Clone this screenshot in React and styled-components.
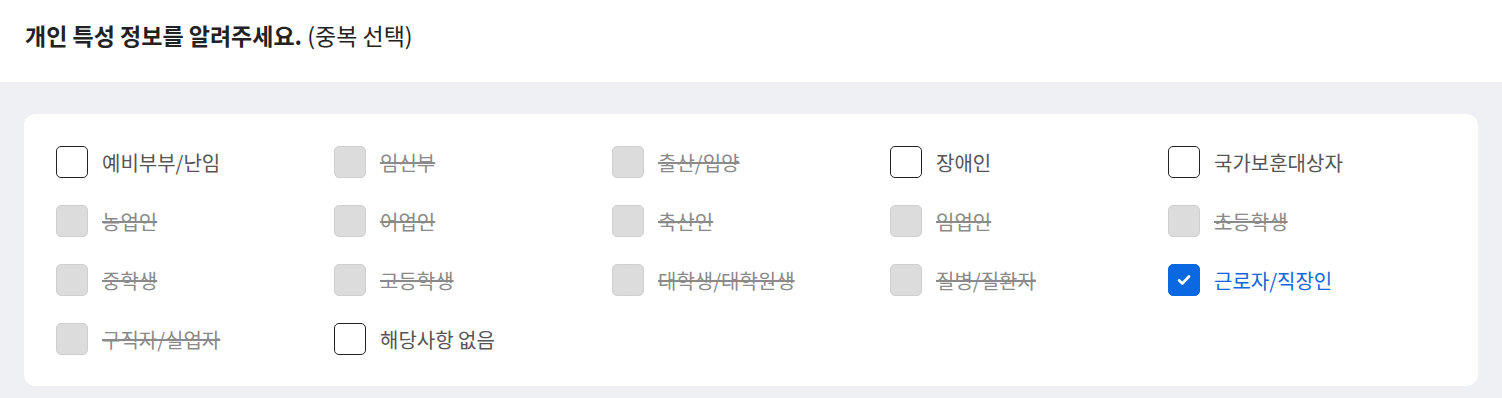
import React from 'react';
import styled, { createGlobalStyle } from 'styled-components';

const GlobalStyle = createGlobalStyle`
  html, body {
    margin: 0;
    padding: 0;
    background: #eff0f3;
    font-family: "Noto Sans CJK KR", "Noto Sans", sans-serif;
  }
`;

const Page = styled.div`
  width: 1502px;
  min-height: 398px;
  background: #eff0f3;
`;

const Header = styled.header`
  height: 82px;
  background: #fff;
  display: flex;
  align-items: center;
  padding: 0 25px 13px;
  box-sizing: border-box;
`;

const Title = styled.h2`
  margin: 0;
  font-size: 23px;
  font-weight: 700;
  color: #222;
  letter-spacing: 0;

  span {
    font-weight: 400;
  }
`;

const Body = styled.main`
  padding: 32px 24px 12px;
`;

const Card = styled.section`
  background: #fff;
  border-radius: 12px;
  padding: 32px 32px 31px;
  display: grid;
  grid-template-columns: repeat(5, 278px);
  row-gap: 27px;
`;

const Option = styled.label`
  display: flex;
  align-items: center;
  gap: 14px;
  height: 32px;
  cursor: ${({ $disabled }) => ($disabled ? 'default' : 'pointer')};
`;

const Box = styled.span`
  width: 32px;
  height: 32px;
  box-sizing: border-box;
  border-radius: 5px;
  display: flex;
  align-items: center;
  justify-content: center;
  flex-shrink: 0;
  border: 1px solid ${({ $checked, $disabled }) => ($checked ? '#0a68e0' : $disabled ? '#cfcfcf' : '#222')};
  background: ${({ $checked, $disabled }) => ($checked ? '#0a68e0' : $disabled ? '#dcdcdc' : '#fff')};
`;

const Label = styled.span`
  font-size: 20px;
  color: ${({ $checked, $disabled }) => ($checked ? '#1466e0' : $disabled ? '#8a8a8a' : '#555')};
  text-decoration: ${({ $disabled }) => ($disabled ? 'line-through' : 'none')};
  text-decoration-thickness: 2px;
`;

const options = [
  { label: '예비부부/난임' },
  { label: '임신부', disabled: true },
  { label: '출산/입양', disabled: true },
  { label: '장애인' },
  { label: '국가보훈대상자' },
  { label: '농업인', disabled: true },
  { label: '어업인', disabled: true },
  { label: '축산인', disabled: true },
  { label: '임업인', disabled: true },
  { label: '초등학생', disabled: true },
  { label: '중학생', disabled: true },
  { label: '고등학생', disabled: true },
  { label: '대학생/대학원생', disabled: true },
  { label: '질병/질환자', disabled: true },
  { label: '근로자/직장인', checked: true },
  { label: '구직자/실업자', disabled: true },
  { label: '해당사항 없음' },
];

const Check = () => (
  <svg width="18" height="18" viewBox="0 0 18 18" fill="none">
    <path d="M4 9.3l3.3 3.2 6.7-7" stroke="#fff" strokeWidth="2.6" strokeLinecap="round" strokeLinejoin="round" />
  </svg>
);

const App = () => {
  return (
    <Page>
      <GlobalStyle />
      <Header>
        <Title>
          개인 특성 정보를 알려주세요. <span>(중복 선택)</span>
        </Title>
      </Header>
      <Body>
        <Card>
          {options.map((o) => (
            <Option key={o.label} $disabled={o.disabled}>
              <Box $checked={o.checked} $disabled={o.disabled}>
                {o.checked && <Check />}
              </Box>
              <Label $checked={o.checked} $disabled={o.disabled}>
                {o.label}
              </Label>
            </Option>
          ))}
        </Card>
      </Body>
    </Page>
  );
};

export default App;
